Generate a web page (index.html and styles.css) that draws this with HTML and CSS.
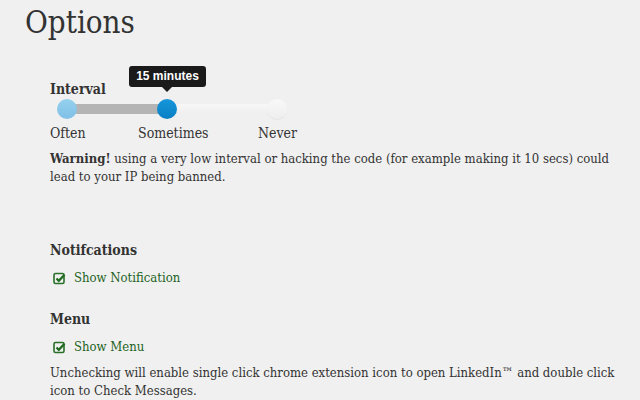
FILE: index.html
```html
<!DOCTYPE html>
<html>
<head>
<meta charset="utf-8">
<link rel="stylesheet" href="styles.css">
</head>
<body>
<h1 class="title">Options</h1>
<div class="content">
  <section class="interval">
    <h3 class="label">Interval</h3>
    <div class="slider">
      <div class="track">
        <div class="fill"></div>
      </div>
      <span class="handle h-often"></span>
      <span class="handle h-some"></span>
      <span class="handle h-never"></span>
      <div class="tip">15 minutes</div>
    </div>
    <div class="ticks">
      <span class="t-often">Often</span>
      <span class="t-some">Sometimes</span>
      <span class="t-never">Never</span>
    </div>
    <p class="warning"><b>Warning!</b> using a very low interval or hacking the code (for example making it 10 secs) could lead to your IP being banned.</p>
  </section>

  <section class="group notif">
    <h3 class="label">Notifcations</h3>
    <div class="check"><svg class="cb" width="13" height="13" viewBox="0 0 13 13"><rect x="1" y="1.5" width="10" height="10" rx="1.5" fill="none" stroke="#2a6f2a" stroke-width="1.6"/><path d="M3.5 6.5 L5.8 8.8 L11.5 2.8" fill="none" stroke="#1f6a1f" stroke-width="2.2" stroke-linejoin="miter"/></svg><span>Show Notification</span></div>
  </section>

  <section class="group menu">
    <h3 class="label">Menu</h3>
    <div class="check"><svg class="cb" width="13" height="13" viewBox="0 0 13 13"><rect x="1" y="1.5" width="10" height="10" rx="1.5" fill="none" stroke="#2a6f2a" stroke-width="1.6"/><path d="M3.5 6.5 L5.8 8.8 L11.5 2.8" fill="none" stroke="#1f6a1f" stroke-width="2.2" stroke-linejoin="miter"/></svg><span>Show Menu</span></div>
    <p class="note">Unchecking will enable single click chrome extension icon to open LinkedIn™ and double click icon to Check Messages.</p>
  </section>
</div>
</body>
</html>
```
FILE: styles.css
```css
html, body {
  margin: 0;
  padding: 0;
  background: #f0f0f0;
}
body {
  font-family: "DejaVu Serif Condensed", "DejaVu Serif", Georgia, serif;
  font-stretch: condensed;
  color: #333;
  font-size: 13px;
  overflow: hidden;
  height: 400px;
}
.title {
  margin: 0;
  padding: 2px 0 0 25px;
  font-weight: normal;
  font-size: 31px;
  line-height: 40px;
  color: #333;
}
.content {
  padding-left: 50px;
  width: 580px;
}
.interval {
  margin-top: 38px;
}
.label {
  margin: 0;
  font-size: 14px;
  font-weight: bold;
  line-height: 18px;
  color: #333;
}
.slider {
  position: relative;
  width: 240px;
  height: 22px;
  margin-top: 0;
}
.track {
  position: absolute;
  left: 17px;
  top: 6px;
  width: 210px;
  height: 10px;
  background: linear-gradient(#f7f7f7, #efefef);
  border-radius: 5px;
}
.fill {
  width: 100px;
  height: 100%;
  background: #b4b4b4;
}
.handle {
  position: absolute;
  top: 1px;
  width: 20px;
  height: 20px;
  border-radius: 50%;
}
.h-often { left: 7px; background: linear-gradient(#95d0ee, #7fc0e6); }
.h-some { left: 107px; background: linear-gradient(#1696db, #0a7fc4); }
.h-never { left: 217px; background: linear-gradient(#f8f8f8, #eeeeee); box-shadow: 0 1px 1px rgba(0,0,0,0.06); }
.tip {
  position: absolute;
  left: 79px;
  top: -32px;
  width: 77px;
  height: 21px;
  background: #1a1a1a;
  color: #fff;
  border-radius: 3px;
  font-family: "Liberation Sans", Arial, sans-serif;
  font-stretch: normal;
  font-size: 12px;
  font-weight: bold;
  line-height: 21px;
  text-align: center;
}
.tip::after {
  content: "";
  position: absolute;
  left: 33px;
  bottom: -5px;
  border-left: 5px solid transparent;
  border-right: 5px solid transparent;
  border-top: 5px solid #1a1a1a;
}
.ticks {
  position: relative;
  height: 20px;
  font-size: 14px;
  line-height: 20px;
  margin-top: 3px;
}
.ticks span { position: absolute; top: 0; }
.t-often { left: 0; }
.t-some { left: 88px; }
.t-never { left: 208px; }
.warning {
  margin: 7px 0 0;
  line-height: 18px;
}
.warning b { font-weight: bold; }
.group .label { margin-bottom: 10px; }
.notif { margin-top: 55px; }
.menu { margin-top: 23px; }
.check {
  display: flex;
  align-items: center;
  gap: 8px;
  padding-left: 3px;
  color: #1e631e;
  line-height: 18px;
}
.note {
  margin: 8px 0 0;
  line-height: 18px;
}
```
